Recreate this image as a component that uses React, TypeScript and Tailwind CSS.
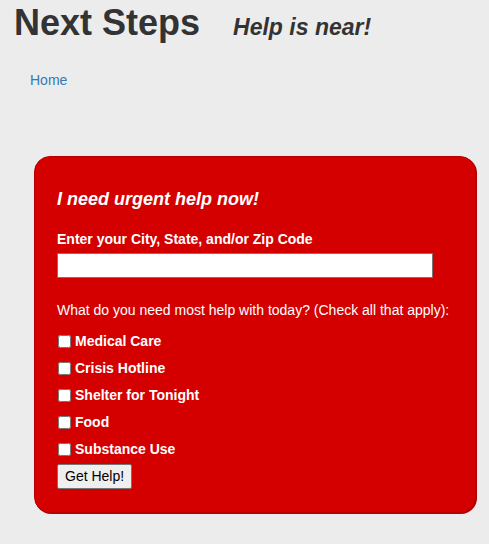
export default function App() {
  const needs = ["Medical Care", "Crisis Hotline", "Shelter for Tonight", "Food", "Substance Use"];

  return (
    <main className="min-h-[544px] bg-[#ececec] font-['Liberation_Sans',Arial,sans-serif] text-[#333]">
      <header className="flex items-baseline pl-[14px] pt-[5px]">
        <h1 className="text-[36px] leading-[36px] font-bold">Next Steps</h1>
        <h2 className="ml-[33px] text-[23px] leading-[24px] font-bold italic">Help is near!</h2>
      </header>

      <nav className="pl-[30px] mt-[31px] text-[14px] leading-[16px]">
        <a href="#" className="block w-fit text-[#337ab7]">
          Home
        </a>
      </nav>

      <section className="ml-[34px] mt-[68px] w-[442px] rounded-[16px] border border-[#b80000] bg-[#d40000] pl-[22px] pt-[32px] pb-[23px] text-white shadow-[1px_1px_0_#b00000]">
        <h3 className="text-[18px] leading-[20px] font-bold italic">I need urgent help now!</h3>

        <label className="mt-[22px] block text-[14px] leading-[16px] font-bold">
          Enter your City, State, and/or Zip Code
        </label>
        <input
          type="text"
          className="mt-[6px] block h-[25px] w-[376px] border border-[#767676] bg-white px-1 text-[14px] text-black"
        />

        <p className="mt-[24px] text-[14px] leading-[16px]">
          What do you need most help with today? (Check all that apply):
        </p>

        <div className="mt-[15px] flex flex-col gap-[11px]">
          {needs.map((n) => (
            <label key={n} className="flex h-[16px] items-center gap-[4px] text-[14px] leading-[16px] font-bold">
              <input type="checkbox" className="m-0 ml-px h-[13px] w-[13px]" />
              {n}
            </label>
          ))}
        </div>

        <button className="mt-[7px] block h-[25px] rounded-[2px] border border-[#767676] bg-[#efefef] px-[7px] text-[14px] text-black">
          Get Help!
        </button>
      </section>
    </main>
  );
}
